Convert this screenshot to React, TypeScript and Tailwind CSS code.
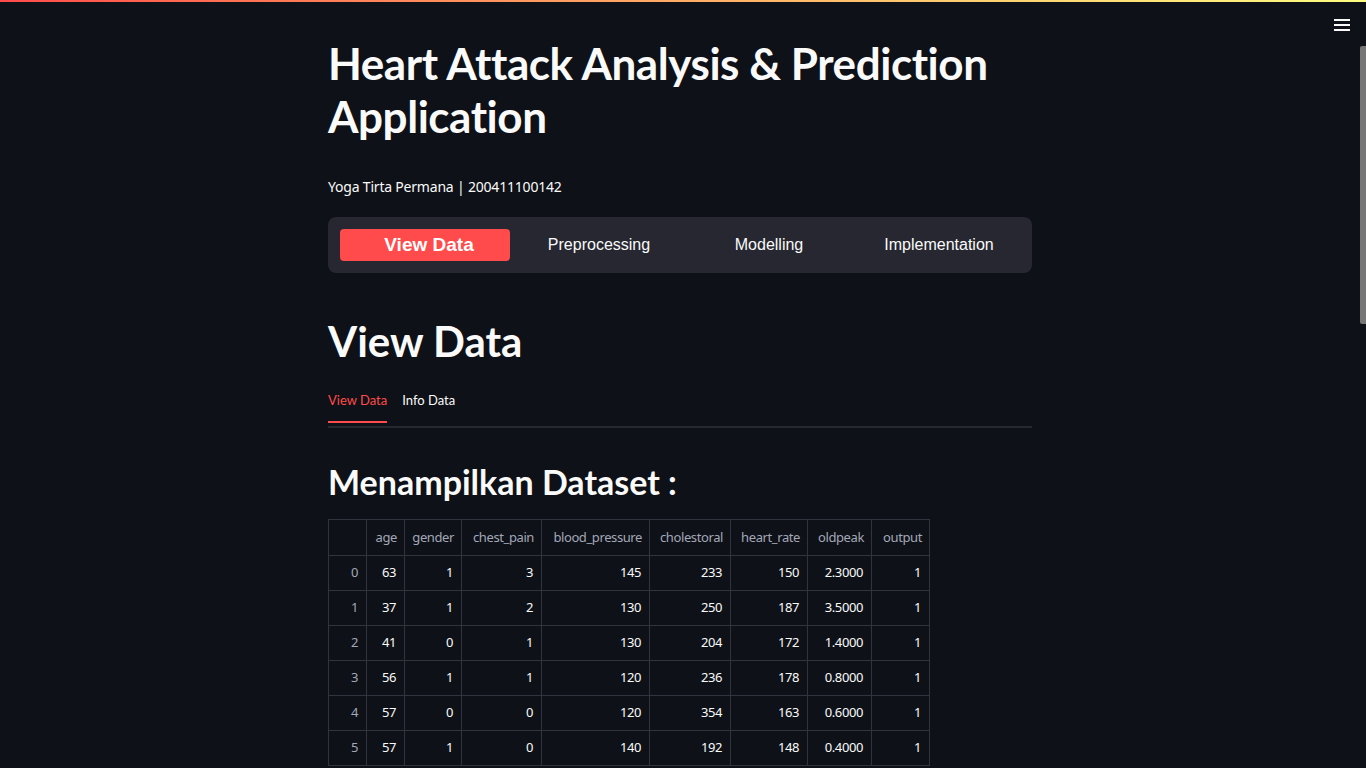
import { useState } from "react";

const columns = [
  { key: "age", label: "age", w: "w-[38px]" },
  { key: "gender", label: "gender", w: "w-[57px]" },
  { key: "chest_pain", label: "chest_pain", w: "w-[80px]" },
  { key: "blood_pressure", label: "blood_pressure", w: "w-[108px]" },
  { key: "cholestoral", label: "cholestoral", w: "w-[81px]" },
  { key: "heart_rate", label: "heart_rate", w: "w-[77px]" },
  { key: "oldpeak", label: "oldpeak", w: "w-[64px]" },
  { key: "output", label: "output", w: "w-[58px]" },
];

const rows = [
  [63, 1, 3, 145, 233, 150, "2.3000", 1],
  [37, 1, 2, 130, 250, 187, "3.5000", 1],
  [41, 0, 1, 130, 204, 172, "1.4000", 1],
  [56, 1, 1, 120, 236, 178, "0.8000", 1],
  [57, 0, 0, 120, 354, 163, "0.6000", 1],
  [57, 1, 0, 140, 192, 148, "0.4000", 1],
];

const menu = ["View Data", "Preprocessing", "Modelling", "Implementation"];

export default function App() {
  const [active, setActive] = useState("View Data");
  const [tab, setTab] = useState("view");

  return (
    <div className="relative h-screen overflow-hidden bg-[#0e1117] pr-[6px] text-[#fafafa] font-['Source_Sans_Pro','Lato',sans-serif]">
      {/* Decoration bar */}
      <div className="absolute inset-x-0 top-0 h-[2px] bg-gradient-to-r from-[#ff4b4b] to-[#fffd80]" />

      {/* Hamburger */}
      <button className="absolute right-[16px] top-[19px] flex flex-col gap-[3px]">
        <span className="block h-[2px] w-[16px] bg-[#fafafa]" />
        <span className="block h-[2px] w-[16px] bg-[#fafafa]" />
        <span className="block h-[2px] w-[16px] bg-[#fafafa]" />
      </button>

      {/* Scrollbar thumb */}
      <div className="absolute right-0 top-[46px] h-[278px] w-[6px] rounded-l-[2px] bg-[#767676]" />

      <main className="mx-auto w-[704px] pt-[37px]">
        <h1 className="text-[44px] font-bold leading-[53px] tracking-[-0.45px]">
          Heart Attack Analysis &amp; Prediction Application
        </h1>

        <p className="mt-[34px] text-[14px] leading-[20px] font-['Noto_Sans',sans-serif] tracking-[-0.2px]">
          Yoga Tirta Permana | 200411100142
        </p>

        <nav className="mt-[20px] grid grid-cols-4 rounded-[8px] bg-[#262730] p-[12px] font-['Liberation_Sans',Arial,sans-serif]">
          {menu.map((m) => (
            <button
              key={m}
              onClick={() => setActive(m)}
              className={`h-[32px] rounded-[4px] pl-[8px] ${
                active === m
                  ? "bg-[#ff4b4b] text-[19px] font-bold text-white"
                  : "text-[16px] text-[#fafafa]"
              }`}
            >
              {m}
            </button>
          ))}
        </nav>

        <h2 className="mt-[41px] text-[42px] font-bold leading-[54px]">View Data</h2>

        <div className="mt-[22px] flex gap-[15px] border-b-2 border-[#262730] pb-[3px] text-[13px] leading-[20px] font-['Lato',sans-serif]">
          <button
            onClick={() => setTab("view")}
            className={`border-b-2 pb-[11px] ${
              tab === "view" ? "border-[#ff4b4b] text-[#ff4b4b]" : "border-transparent text-[#fafafa]"
            }`}
          >
            View Data
          </button>
          <button
            onClick={() => setTab("info")}
            className={`border-b-2 pb-[11px] ${
              tab === "info" ? "border-[#ff4b4b] text-[#ff4b4b]" : "border-transparent text-[#fafafa]"
            }`}
          >
            Info Data
          </button>
        </div>

        <h3 className="mt-[32px] text-[34px] font-bold leading-[44px]">Menampilkan Dataset :</h3>

        <table className="mt-[15px] border-collapse text-[13px] font-['Noto_Sans',sans-serif] tracking-[-0.4px]">
          <thead>
            <tr className="h-[36px] text-[#a3a8b8]">
              <th className="w-[38px] border border-[#31333f] font-normal" />
              {columns.map((c) => (
                <th key={c.key} className={`${c.w} border border-[#31333f] px-[7px] text-right font-normal`}>
                  {c.label}
                </th>
              ))}
            </tr>
          </thead>
          <tbody>
            {rows.map((r, i) => (
              <tr key={i} className="h-[35px]">
                <td className="border border-[#31333f] px-[8px] text-right text-[#a3a8b8]">{i}</td>
                {r.map((v, j) => (
                  <td key={j} className="border border-[#31333f] px-[8px] text-right">
                    {v}
                  </td>
                ))}
              </tr>
            ))}
          </tbody>
        </table>
      </main>
    </div>
  );
}
